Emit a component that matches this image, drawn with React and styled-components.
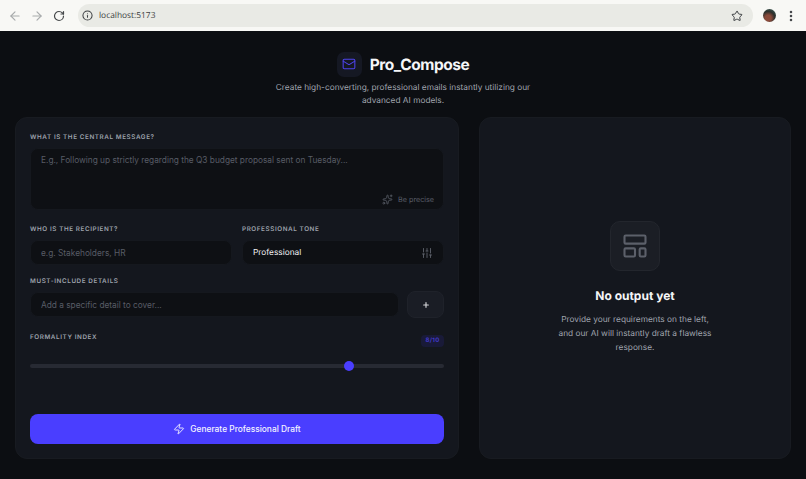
import React from 'react';
import styled, { createGlobalStyle } from 'styled-components';
import {
  ArrowLeft,
  ArrowRight,
  RotateCw,
  Info,
  Star,
  EllipsisVertical,
  Mail,
  Sparkles,
  SlidersVertical,
  Plus,
  Zap,
  LayoutTemplate,
} from 'lucide-react';

const GlobalStyle = createGlobalStyle`
  html, body {
    margin: 0;
    height: 100%;
    overflow: hidden;
    background: #0c0e12;
    font-family: Inter, "Liberation Sans", sans-serif;
    text-rendering: geometricPrecision;
  }
  * { box-sizing: border-box; }
`;

export default function App() {
  return (
    <>
      <GlobalStyle />
      <Browser>
        <NavIcon $dim><ArrowLeft size={14} strokeWidth={2} /></NavIcon>
        <NavIcon $dim><ArrowRight size={14} strokeWidth={2} /></NavIcon>
        <NavIcon><RotateCw size={12} strokeWidth={2.4} /></NavIcon>
        <Omnibox>
          <Info size={11} strokeWidth={2.2} color="#3c3f42" />
          <Url>localhost:5173</Url>
          <Bookmark><Star size={12} strokeWidth={2} /></Bookmark>
        </Omnibox>
        <Avatar />
        <Menu><EllipsisVertical size={14} strokeWidth={2.4} /></Menu>
      </Browser>

      <Page>
        <Header>
          <Brand>
            <BrandIcon><Mail size={14} strokeWidth={1.8} /></BrandIcon>
            <Title>Pro_Compose</Title>
          </Brand>
          <Subtitle>
            Create high-converting, professional emails instantly utilizing our advanced AI models.
          </Subtitle>
        </Header>

        <Columns>
          <FormPanel>
            <Field>
              <Label>What is the central message?</Label>
              <MessageBox>
                <MessageInput placeholder="E.g., Following up strictly regarding the Q3 budget proposal sent on Tuesday..." />
                <Hint><Sparkles size={11} strokeWidth={1.8} />Be precise</Hint>
              </MessageBox>
            </Field>

            <TwoCols>
              <Field>
                <Label>Who is the recipient?</Label>
                <TextInput placeholder="e.g. Stakeholders, HR" />
              </Field>
              <Field>
                <Label>Professional tone</Label>
                <SelectBox>
                  Professional
                  <SlidersVertical size={12} strokeWidth={1.8} color="#5f636c" />
                </SelectBox>
              </Field>
            </TwoCols>

            <DetailField>
              <Label>Must-include details</Label>
              <DetailRow>
                <TextInput placeholder="Add a specific detail to cover..." />
                <AddButton><Plus size={8} strokeWidth={3.5} /></AddButton>
              </DetailRow>
            </DetailField>

            <FormalityHead>
              <Label>Formality index</Label>
              <Badge>8/10</Badge>
            </FormalityHead>
            <Slider type="range" min="1" max="10" defaultValue="8" />

            <Generate>
              <Zap size={12} strokeWidth={1.8} />
              Generate Professional Draft
            </Generate>
          </FormPanel>

          <OutputPanel>
            <EmptyIcon><LayoutTemplate size={28} strokeWidth={1.8} /></EmptyIcon>
            <EmptyTitle>No output yet</EmptyTitle>
            <EmptyText>
              Provide your requirements on the left, and our AI will instantly draft a flawless response.
            </EmptyText>
          </OutputPanel>
        </Columns>
      </Page>
    </>
  );
}

const Browser = styled.div`
  height: 31px;
  display: flex;
  align-items: center;
  padding: 0 8px;
  background: #f8f8f5;
`;

const NavIcon = styled.span`
  width: 14px;
  height: 14px;
  margin-right: 8px;
  display: flex;
  align-items: center;
  justify-content: center;
  color: ${(p) => (p.$dim ? '#a8abac' : '#45484a')};
`;

const Omnibox = styled.div`
  flex: 1;
  height: 23px;
  margin: 0 10px 0 4px;
  padding: 0 10px 0 4px;
  display: flex;
  align-items: center;
  gap: 6px;
  border-radius: 12px;
  background: #e9eae5;
`;

const Url = styled.span`
  flex: 1;
  font-size: 8.4px;
  font-family: "Open Sans", sans-serif;
  color: #3c3f42;
`;

const Bookmark = styled.span`
  display: flex;
  color: #3c3f42;
`;

const Avatar = styled.div`
  width: 13px;
  height: 13px;
  border-radius: 50%;
  background: radial-gradient(circle at 40% 70%, #8a4a3a 0 25%, #2d2f2c 55%, #3f6b63 100%);
`;

const Menu = styled.span`
  width: 14px;
  margin-left: 8px;
  display: flex;
  color: #45484a;
`;

const Page = styled.main`
  height: 448px;
  padding: 20px 15px 20px;
  background: #0c0e12;
`;

const Header = styled.header`
  height: 66px;
  display: flex;
  flex-direction: column;
  align-items: center;
`;

const Brand = styled.div`
  height: 26px;
  display: flex;
  align-items: center;
  gap: 8px;
`;

const BrandIcon = styled.div`
  width: 25px;
  height: 25px;
  display: flex;
  align-items: center;
  justify-content: center;
  border-radius: 7px;
  background: #151823;
  color: #4d43ea;
`;

const Title = styled.h1`
  margin: 0;
  font-size: 15.5px;
  font-weight: 700;
  letter-spacing: -0.45px;
  color: #f6f7f9;
`;

const Subtitle = styled.p`
  width: 270px;
  margin: 5px 0 0;
  font-size: 8.3px;
  line-height: 13px;
  text-align: center;
  color: #a0a5af;
`;

const Columns = styled.div`
  display: grid;
  grid-template-columns: 444px 312px;
  gap: 20px;
  height: 342px;
`;

const Panel = styled.section`
  border-radius: 12px;
  border: 1px solid #181b21;
  background: #14171e;
`;

const FormPanel = styled(Panel)`
  padding: 15px 14px 14.5px;
  display: flex;
  flex-direction: column;
`;

const OutputPanel = styled(Panel)`
  display: flex;
  flex-direction: column;
  align-items: center;
  justify-content: center;
`;

const Field = styled.div`
  min-width: 0;
  display: flex;
  flex-direction: column;
  gap: 6px;
`;

const DetailField = styled(Field)`
  margin-top: 12px;
  gap: 5px;
`;

const Label = styled.label`
  font-size: 6.3px;
  line-height: 9px;
  font-weight: 600;
  letter-spacing: 0.6px;
  text-transform: uppercase;
  color: #9ea3ad;
`;

const MessageBox = styled.div`
  position: relative;
  height: 62px;
`;

const fieldSurface = `
  border: 1px solid #15181e;
  border-radius: 8px;
  background: #0e1014;
  font-family: inherit;
  font-size: 8.3px;
  color: #f1f2f4;
  outline: none;
  &::placeholder { color: #585c66; opacity: 1; }
`;

const MessageInput = styled.textarea`
  ${fieldSurface}
  display: block;
  width: 100%;
  height: 100%;
  padding: 6px 10px;
  resize: none;
`;

const Hint = styled.span`
  position: absolute;
  right: 10px;
  bottom: 5px;
  display: flex;
  align-items: center;
  gap: 5px;
  font-size: 7.2px;
  color: #585c66;
`;

const TwoCols = styled.div`
  display: grid;
  grid-template-columns: 1fr 1fr;
  gap: 10px;
  margin-top: 15px;
`;

const TextInput = styled.input`
  ${fieldSurface}
  flex: 1;
  width: 100%;
  min-width: 0;
  height: 25px;
  padding: 0 10px;
`;

const SelectBox = styled.div`
  height: 25px;
  padding: 0 10px;
  display: flex;
  align-items: center;
  justify-content: space-between;
  border: 1px solid #15181e;
  border-radius: 8px;
  background: #0e1014;
  font-size: 8.3px;
  color: #f1f2f4;
`;

const DetailRow = styled.div`
  display: flex;
  align-items: center;
  gap: 8px;
`;

const AddButton = styled.button`
  width: 37px;
  height: 27px;
  padding: 0;
  flex: none;
  display: flex;
  align-items: center;
  justify-content: center;
  border: 1px solid #1f222a;
  border-radius: 8px;
  background: #1a1d25;
  color: #d5d6da;
`;

const FormalityHead = styled.div`
  margin-top: 15px;
  display: flex;
  align-items: flex-start;
  justify-content: space-between;
`;

const Badge = styled.span`
  margin-top: 2px;
  padding: 2px 4.5px;
  border-radius: 4px;
  background: #191a38;
  font-size: 6px;
  line-height: 8px;
  font-weight: 700;
  letter-spacing: 0.3px;
  color: #4239c8;
`;

const Slider = styled.input`
  appearance: none;
  display: block;
  width: 100%;
  height: 4px;
  margin: 17px 0 0;
  border-radius: 2px;
  background: #272a33;
  outline: none;

  &::-webkit-slider-thumb {
    appearance: none;
    width: 10px;
    height: 10px;
    border-radius: 50%;
    background: #4a3eff;
  }
`;

const Generate = styled.button`
  height: 30px;
  margin-top: auto;
  display: flex;
  align-items: center;
  justify-content: center;
  gap: 5px;
  border: 0;
  border-radius: 8px;
  background: #4a3eff;
  font-family: inherit;
  font-size: 8.4px;
  font-weight: 500;
  color: #f4f4ff;
`;

const EmptyIcon = styled.div`
  width: 50px;
  height: 50px;
  display: flex;
  align-items: center;
  justify-content: center;
  border: 1px solid #23262d;
  border-radius: 10px;
  background: #1b1e25;
  color: #5c606a;
`;

const EmptyTitle = styled.h2`
  margin: 17px 0 0;
  font-size: 12px;
  line-height: 15px;
  font-weight: 700;
  color: #f4f5f7;
`;

const EmptyText = styled.p`
  width: 158px;
  margin: 10px 0 0;
  font-size: 8.3px;
  line-height: 14px;
  text-align: center;
  color: #a0a5af;
`;
